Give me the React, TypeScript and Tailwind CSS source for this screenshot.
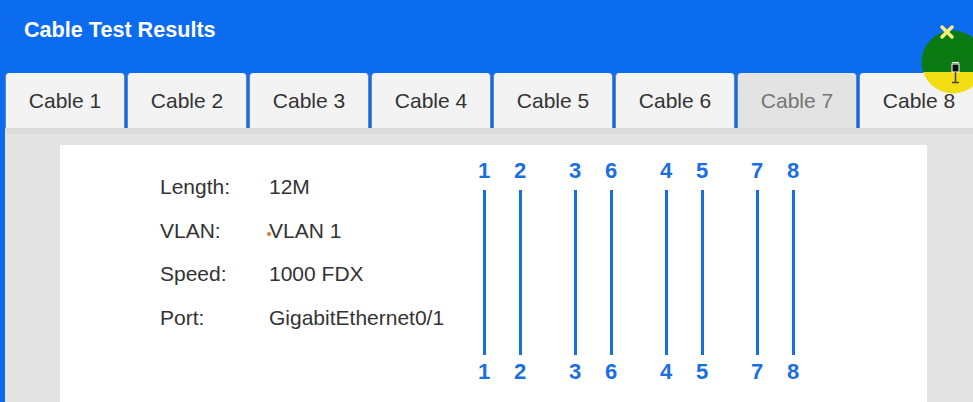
import React from "react";

const tabs = ["Cable 1", "Cable 2", "Cable 3", "Cable 4", "Cable 5", "Cable 6", "Cable 7", "Cable 8"];
const rows: [string, string][] = [
  ["Length:", "12M"],
  ["VLAN:", "VLAN 1"],
  ["Speed:", "1000 FDX"],
  ["Port:", "GigabitEthernet0/1"],
];
const pairs = [
  ["1", "2"],
  ["3", "6"],
  ["4", "5"],
  ["7", "8"],
];

function Pin({ n }: { n: string }) {
  return (
    <div className="flex w-[20px] flex-col items-center">
      <div className="text-[22px] font-bold leading-[24px] text-[#1a6fe0]">{n}</div>
      <div className="mt-[7px] h-[165px] w-[3px] bg-[#1a6fe0]" />
      <div className="mt-[5px] text-[22px] font-bold leading-[24px] text-[#1a6fe0]">{n}</div>
    </div>
  );
}

export default function App() {
  return (
    <div
      className="relative h-[402px] w-[973px] overflow-hidden bg-[#0b6cf0]"
      style={{ fontFamily: '"Liberation Sans", Arial, sans-serif' }}
    >
      {/* header */}
      <div className="flex h-[73px] items-start pl-[24px] pt-[17px]">
        <h1 className="text-[21.6px] font-bold leading-[26px] text-white">Cable Test Results</h1>
      </div>

      {/* body */}
      <div className="ml-[5px] flex flex-col">
        {/* tabs */}
        <div className="flex h-[55px] gap-[2px]">
          {tabs.map((t, i) => {
            const active = i === 6;
            return (
              <div
                key={t}
                className={
                  active
                    ? "flex h-full w-[120px] shrink-0 items-center justify-center rounded-t-[4px] border-x border-[#5f86cc] bg-[#e3e3e3] text-[21px] text-[#757575]"
                    : "flex h-full w-[120px] shrink-0 items-center justify-center rounded-t-[4px] border-x border-[#5f86cc] bg-[#f3f3f3] text-[21px] text-[#333333]"
                }
              >
                {t}
              </div>
            );
          })}
        </div>

        {/* content area */}
        <div className="h-[274px] border-t-[6px] border-[#dcdcdc] bg-[#e4e4e4] pl-[55px] pt-[11px]">
          <div className="flex h-[300px] w-[867px] bg-white pl-[100px]">
            <div className="relative w-[314px] pt-[20px]">
              {rows.map(([k, v]) => (
                <div key={k} className="flex h-[43.5px] items-center text-[21px] text-[#333333]">
                  <div className="w-[109px]">{k}</div>
                  <div className="relative">
                    {k === "VLAN:" && (
                      <span className="absolute left-[-2px] top-[17px] h-[4px] w-[4px] rounded-full bg-[#e8732a]" />
                    )}
                    {v}
                  </div>
                </div>
              ))}
            </div>
            <div className="flex gap-[35px] pt-[14px]">
              {pairs.map((p) => (
                <div key={p[0]} className="flex gap-[16px]">
                  <Pin n={p[0]} />
                  <Pin n={p[1]} />
                </div>
              ))}
            </div>
          </div>
        </div>
      </div>

      {/* cursor highlight overlay */}
      <svg className="pointer-events-none absolute left-[920px] top-[28px]" width="66" height="68" viewBox="0 0 66 68">
        <defs>
          <clipPath id="topc">
            <rect x="0" y="0" width="66" height="44" />
          </clipPath>
          <clipPath id="botc">
            <rect x="0" y="44" width="66" height="30" />
          </clipPath>
        </defs>
        <circle cx="33" cy="34" r="31.5" fill="#0c7a12" clipPath="url(#topc)" />
        <circle cx="33" cy="34" r="31.5" fill="#f2dc12" clipPath="url(#botc)" />
        {/* I-beam cursor */}
        <rect x="32" y="36" width="7" height="8" fill="#111" stroke="#fff" strokeWidth="1" />
        <line x1="35.5" y1="44" x2="35.5" y2="54" stroke="#444" strokeWidth="1.5" />
        <line x1="32" y1="54.5" x2="39" y2="54.5" stroke="#444" strokeWidth="1.5" />
        <line x1="32" y1="34.5" x2="39" y2="34.5" stroke="#fff" strokeWidth="1" />
      </svg>
      {/* close X */}
      <svg className="absolute left-[939px] top-[24px]" width="16" height="16" viewBox="0 0 16 16">
        <path d="M3 3 L13 13 M13 3 L3 13" stroke="#f4f07c" strokeWidth="3.5" strokeLinecap="round" />
      </svg>
    </div>
  );
}
